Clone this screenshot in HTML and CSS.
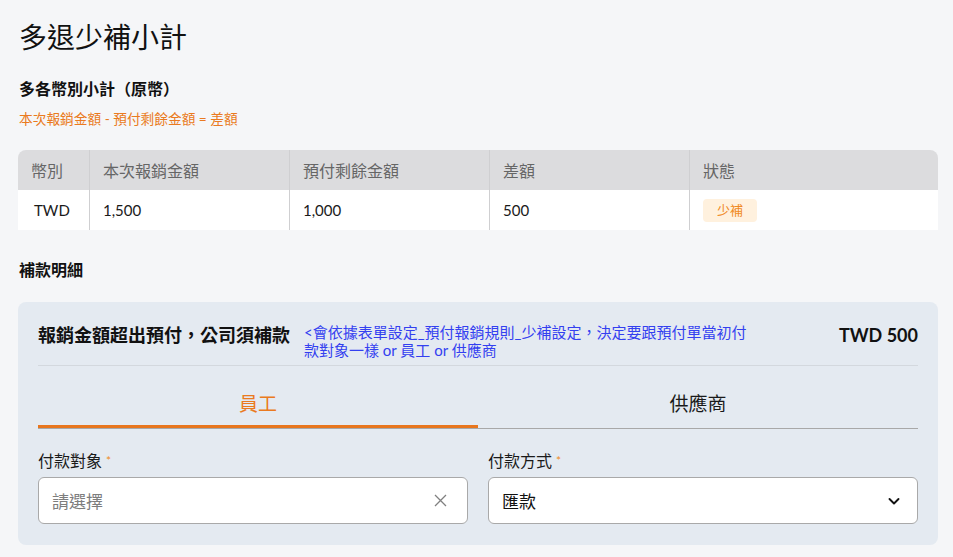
FILE: index.html
```html
<!DOCTYPE html>
<html lang="zh-Hant">
<head>
<meta charset="utf-8">
<link rel="stylesheet" href="styles.css">
</head>
<body>
<div class="page">
  <h1 class="title">多退少補小計</h1>
  <h2 class="section">多各幣別小計（原幣）</h2>
  <p class="formula">本次報銷金額 - 預付剩餘金額 = 差額</p>
  <table class="tbl">
    <thead>
      <tr><th class="c1">幣別</th><th class="c2">本次報銷金額</th><th class="c2">預付剩餘金額</th><th class="c2">差額</th><th class="c5">狀態</th></tr>
    </thead>
    <tbody>
      <tr><td class="c1 cur">TWD</td><td>1,500</td><td>1,000</td><td>500</td><td><span class="badge">少補</span></td></tr>
    </tbody>
  </table>
  <h2 class="section section2">補款明細</h2>
  <div class="card">
    <div class="card-head">
      <div class="head-title">報銷金額超出預付，公司須補款</div>
      <div class="head-note">&lt;會依據表單設定_預付報銷規則_少補設定，決定要跟預付單當初付款對象一樣 or 員工 or 供應商</div>
      <div class="head-amt">TWD 500</div>
    </div>
    <div class="tabs">
      <div class="tab active">員工</div>
      <div class="tab">供應商</div>
    </div>
    <div class="fields">
      <div class="field">
        <div class="label">付款對象 <span class="req">*</span></div>
        <div class="input">
          <span class="ph">請選擇</span>
          <svg class="ico ico-x" width="13" height="13" viewBox="0 0 13 13"><path d="M1 1 L12 12 M12 1 L1 12" stroke="#808080" stroke-width="1.3" fill="none"/></svg>
        </div>
      </div>
      <div class="field">
        <div class="label">付款方式 <span class="req">*</span></div>
        <div class="input">
          <span class="val">匯款</span>
          <svg class="ico" width="12" height="12" viewBox="0 0 12 12"><path d="M1.5 4 L6 8.5 L10.5 4" stroke="#111" stroke-width="1.9" fill="none" stroke-linecap="round" stroke-linejoin="round"/></svg>
        </div>
      </div>
    </div>
  </div>
</div>
</body>
</html>
```

FILE: styles.css
```css
* { box-sizing: border-box; }
html, body { margin: 0; padding: 0; }
body {
  background: #f5f6f8;
  font-family: Lato, "Noto Sans CJK TC", sans-serif;
  color: #1a1a1a;
  width: 953px;
  height: 557px;
  overflow: hidden;
}
.page { padding: 19px 15px 0 18px; }
.title {
  margin: 0 0 24px 1px;
  font-size: 28px;
  font-weight: 400;
  line-height: 36px;
  color: #111;
}
.section {
  margin: 0 0 0 1px;
  font-size: 16px;
  font-weight: 700;
  line-height: 20px;
  color: #111;
}
.section2 { margin-top: 30px; }
.formula {
  margin: 11px 0 0 1px;
  font-size: 13.7px;
  line-height: 18px;
  color: #ea7a20;
}
.tbl {
  margin-top: 22px;
  width: 920px;
  border-collapse: separate;
  border-spacing: 0;
  table-layout: fixed;
}
.tbl th, .tbl td {
  text-align: left;
  padding: 0 0 0 13px;
  height: 40px;
  font-size: 15px;
  border-left: 1px solid #cfcfd1;
}
.tbl th:first-child, .tbl td:first-child { border-left: none; }
.tbl th {
  background: #dcdcde;
  color: #666;
  font-weight: 400;
  font-size: 16px;
}
.tbl th:first-child { border-top-left-radius: 8px; }
.tbl th:last-child { border-top-right-radius: 8px; }
.tbl td { background: #fff; color: #1a1a1a; }
.tbl .c1 { width: 71px; }
.tbl .c2 { width: 200px; }
.tbl .cur { padding-left: 16px; }
.badge {
  display: inline-block;
  background: #fff1de;
  color: #f08a24;
  font-size: 13px;
  line-height: 23px;
  padding: 0 14px;
  border-radius: 4px;
}
.card {
  margin-top: 22px;
  width: 920px;
  background: #e4eaf1;
  border-radius: 8px;
  padding: 20px 20px 21px 20px;
}
.card-head {
  display: flex;
  align-items: flex-start;
  padding-bottom: 5px;
  border-bottom: 1px solid #d3d8de;
  min-height: 44px;
}
.head-title {
  font-size: 18px;
  font-weight: 700;
  line-height: 26px;
  color: #111;
  white-space: nowrap;
}
.head-note {
  margin-left: 14px;
  margin-top: 1px;
  width: 452px;
  font-size: 15px;
  line-height: 18px;
  color: #3340f0;
}
.head-amt {
  margin-left: auto;
  font-size: 18px;
  font-weight: 700;
  line-height: 26px;
  color: #111;
}
.tabs {
  display: flex;
  align-items: flex-end;
  border-bottom: 1px solid #a8a8a8;
}
.tab {
  flex: 1;
  text-align: center;
  font-size: 19px;
  line-height: 28px;
  padding-top: 24px;
  padding-bottom: 10px;
  color: #1a1a1a;
}
.tab.active {
  color: #ea7a20;
  padding-bottom: 7px;
  border-bottom: 3px solid #e8761e;
}
.fields {
  display: grid;
  grid-template-columns: 1fr 1fr;
  gap: 20px;
  margin-top: 22px;
}
.label {
  font-size: 16px;
  line-height: 20px;
  color: #1a1a1a;
  margin-bottom: 6px;
}
.req { color: #f08a24; font-size: 12px; vertical-align: top; }
.input {
  height: 47px;
  background: #fff;
  border: 1px solid #a9a9a9;
  border-radius: 6px;
  display: flex;
  align-items: center;
  padding: 0 17px 0 13px;
}
.ph { color: #7d7d7d; font-size: 17px; }
.val { color: #111; font-size: 17px; }
.ico { margin-left: auto; }
.ico-x { margin-right: 3px; }
```
